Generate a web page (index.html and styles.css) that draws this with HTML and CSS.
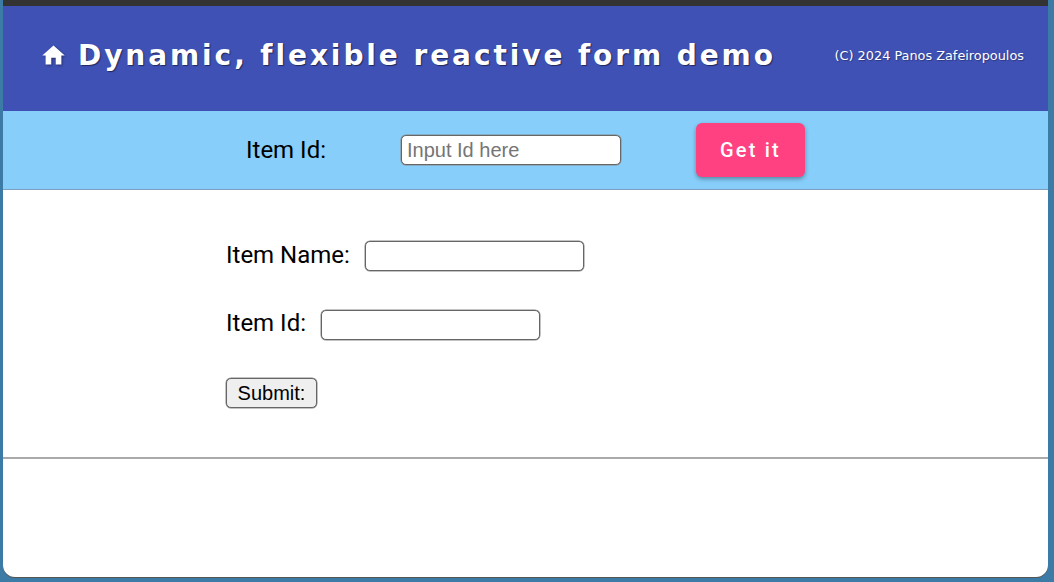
FILE: index.html
```html
<!DOCTYPE html>
<html lang="en">
<head>
    <meta charset="UTF-8">
    <meta name="viewport" content="width=device-width, initial-scale=1.0">
    <title>Dynamic, flexible reactive form demo</title>
    <link rel="stylesheet" href="styles.css">
</head>
<body>

    <div class="window">

        <!-- Toolbar -->
        <header class="toolbar">
            <div class="brand">
                <svg class="home-icon" viewBox="0 0 24 24"><path d="M10 20v-6h4v6h5v-8h3L12 3 2 12h3v8z"/></svg>
                <h1>Dynamic, flexible reactive form demo</h1>
            </div>
            <span class="copyright">(C) 2024 Panos Zafeiropoulos</span>
        </header>

        <!-- Search bar -->
        <div class="search-bar">
            <label class="search-label" for="search-id">Item Id:</label>
            <input class="field search-field" id="search-id" type="text" placeholder="Input Id here">
            <button class="get-btn">Get it</button>
        </div>

        <!-- Form -->
        <form class="item-form">
            <div class="form-row">
                <label for="item-name">Item Name:</label>
                <input class="field" id="item-name" type="text">
            </div>
            <div class="form-row">
                <label for="item-id">Item Id:</label>
                <input class="field" id="item-id" type="text">
            </div>
            <button class="submit-btn" type="button">Submit:</button>
        </form>

    </div>

</body>
</html>
```

FILE: styles.css
```css
* { margin: 0; padding: 0; box-sizing: border-box; }
html, body { height: 100%; }
body {
    background: #3b7ba6;
    padding: 0 6px 5px 3px;
    font-family: 'Roboto', sans-serif;
    color: #000;
    overflow: hidden;
}

.window {
    height: 100%;
    background: #fff;
    border-radius: 0 0 12px 12px;
    box-shadow: 0 1px 0 #555;
    overflow: hidden;
}

/* Toolbar */
.toolbar {
    height: 111px;
    background: #3f51b5;
    border-top: 6px solid #333;
    color: #fff;
    display: flex;
    align-items: center;
    justify-content: space-between;
    padding: 0 24px 7px 37px;
}
.brand {
    display: flex;
    align-items: center;
    gap: 11px;
}
.home-icon {
    width: 27px;
    height: 27px;
    fill: #fff;
    filter: drop-shadow(1px 1px 1px rgba(0, 0, 0, 0.4));
}
.brand h1 {
    font-family: 'DejaVu Sans', sans-serif;
    font-size: 28px;
    font-weight: 700;
    letter-spacing: 2.92px;
    text-shadow: 1px 1px 1px rgba(0, 0, 0, 0.5);
    white-space: nowrap;
}
.copyright {
    font-family: 'DejaVu Sans', sans-serif;
    font-size: 12.85px;
    text-shadow: 1px 1px 1px rgba(0, 0, 0, 0.3);
    white-space: nowrap;
}

/* Search bar */
.search-bar {
    height: 79px;
    background: #87cefa;
    border-bottom: 1px solid #7f9fc0;
    display: flex;
    align-items: center;
    padding-left: 243px;
}
.search-label {
    font-size: 24px;
    width: 155px;
}
.field {
    width: 219px;
    height: 30px;
    border: 1px solid #666;
    border-radius: 5px;
    background: #fff;
    padding: 0 5px;
    font-family: 'Liberation Sans', sans-serif;
    font-size: 20px;
    color: #000;
    box-shadow: 0 0 0 0.5px #888;
}
.field::placeholder { color: #757575; }
.search-field { width: 220px; }
.get-btn {
    margin-left: 75px;
    width: 109px;
    height: 54px;
    border: none;
    border-radius: 6px;
    background: #ff4081;
    color: #fff;
    font-family: 'Roboto', sans-serif;
    font-size: 20px;
    font-weight: 500;
    letter-spacing: 2.2px;
    box-shadow: 0 2px 4px rgba(0, 0, 0, 0.35);
}

/* Form */
.item-form {
    height: 269px;
    border-bottom: 2px solid #aaa;
    padding: 51px 0 0 223px;
}
.form-row {
    display: flex;
    align-items: center;
    gap: 15px;
    height: 30px;
    margin-bottom: 38.6px;
}
.form-row label {
    font-size: 24px;
    padding-bottom: 3px;
}
.submit-btn {
    display: block;
    width: 91px;
    height: 30px;
    border: 1px solid #666;
    border-radius: 5px;
    background: #efefef;
    font-family: 'Liberation Sans', sans-serif;
    font-size: 20px;
    color: #000;
    box-shadow: 0 0 0 0.5px #888;
}
```
